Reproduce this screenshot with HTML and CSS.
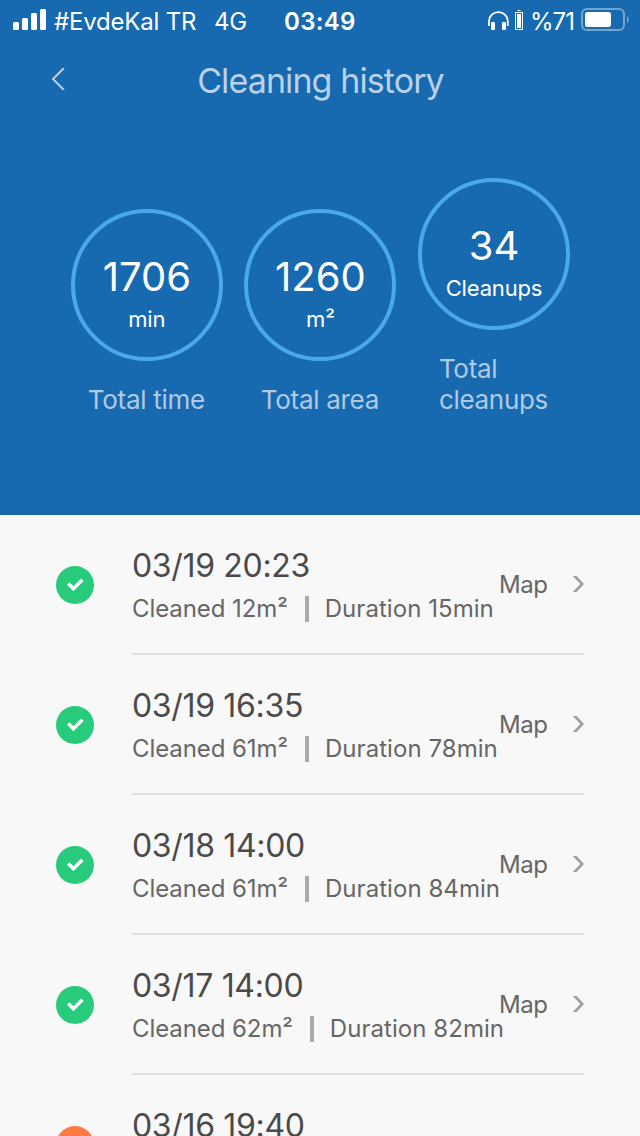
FILE: index.html
```html
<!DOCTYPE html>
<html lang="en">
<head>
<meta charset="utf-8">
<title>Cleaning history</title>
<link rel="stylesheet" href="styles.css">
</head>
<body>
<svg class="defs" width="0" height="0">
  <symbol id="check" viewBox="0 0 38 38"><circle cx="19" cy="19" r="19" fill="#28ca7b"/><path d="M12.2 17.6l5.2 5.2 9-9" fill="none" stroke="#fff" stroke-width="3.6"/></symbol>
  <symbol id="alert" viewBox="0 0 38 38"><circle cx="19" cy="19" r="19" fill="#ff7a45"/><path d="M19 11v10M19 25v4" fill="none" stroke="#fff" stroke-width="3.6"/></symbol>
  <symbol id="next" viewBox="0 0 12 18"><path d="M.8 1h3.8L12 9 4.6 17H.8L8.3 9z" fill="#a0a0a0"/></symbol>
</svg>
<div class="screen">
  <header class="header">
    <div class="status">
      <svg class="signal" width="34" height="22" viewBox="0 0 34 22" fill="#fff"><rect x="0" y="13" width="6" height="8" rx="1.5"/><rect x="9" y="9" width="6" height="12" rx="1.5"/><rect x="18" y="4" width="6" height="17" rx="1.5"/><rect x="27" y="0" width="6" height="21" rx="1.5"/></svg>
      <span class="carrier">#EvdeKal TR</span>
      <span class="network">4G</span>
      <span class="clock">03:49</span>
      <svg class="phones" width="21" height="20" viewBox="0 0 21 20"><path d="M1 15V10a9.4 8.8 0 0 1 18.8 0v5" fill="none" stroke="#fff" stroke-width="1.8"/><rect x="3" y="11" width="4" height="8" rx="1" fill="#fff"/><rect x="14" y="11" width="4" height="8" rx="1" fill="#fff"/></svg>
      <svg class="cell" width="8" height="20" viewBox="0 0 8 20"><path d="M2.5 .5h3" stroke="#fff"/><rect x=".5" y="2.5" width="7" height="17" fill="none" stroke="#fff"/><rect x="2" y="4" width="4" height="14" fill="#fff"/></svg>
      <span class="percent">%71</span>
      <svg class="battery" width="48" height="24" viewBox="0 0 48 24"><rect x="1" y="1" width="42" height="21" rx="5" fill="none" stroke="#75a5cf" stroke-width="2"/><rect x="4" y="4" width="26" height="15" rx="2.5" fill="#fff"/><path d="M46 8c2.2 1.2 2.2 6 0 7.2z" fill="#75a5cf"/></svg>
    </div>
    <nav class="nav">
      <svg class="back" width="14" height="24" viewBox="0 0 14 24"><path d="M12.7 1.3L2 12l10.7 10.7" fill="none" stroke="#b9d2e8" stroke-width="2"/></svg>
      <h1 class="title">Cleaning history</h1>
    </nav>
    <div class="stats">
      <div class="stat"><div class="ring"><span class="value">1706</span><span class="unit">min</span></div><div class="label">Total time</div></div>
      <div class="stat"><div class="ring"><span class="value">1260</span><span class="unit">m²</span></div><div class="label">Total area</div></div>
      <div class="stat"><div class="ring"><span class="value">34</span><span class="unit">Cleanups</span></div><div class="label">Total<br>cleanups</div></div>
    </div>
  </header>
  <main class="list">
    <article class="row"><svg class="state"><use href="#check"/></svg><div class="entry"><div class="info"><div class="date">03/19 20:23</div><div class="detail"><span>Cleaned 12m²</span><i class="bar"></i><span>Duration 15min</span></div></div><span class="map">Map</span><svg class="next"><use href="#next"/></svg></div></article>
    <article class="row"><svg class="state"><use href="#check"/></svg><div class="entry"><div class="info"><div class="date">03/19 16:35</div><div class="detail"><span>Cleaned 61m²</span><i class="bar"></i><span>Duration 78min</span></div></div><span class="map">Map</span><svg class="next"><use href="#next"/></svg></div></article>
    <article class="row"><svg class="state"><use href="#check"/></svg><div class="entry"><div class="info"><div class="date">03/18 14:00</div><div class="detail"><span>Cleaned 61m²</span><i class="bar"></i><span>Duration 84min</span></div></div><span class="map">Map</span><svg class="next"><use href="#next"/></svg></div></article>
    <article class="row"><svg class="state"><use href="#check"/></svg><div class="entry"><div class="info"><div class="date">03/17 14:00</div><div class="detail"><span>Cleaned 62m²</span><i class="bar"></i><span>Duration 82min</span></div></div><span class="map">Map</span><svg class="next"><use href="#next"/></svg></div></article>
    <article class="row"><svg class="state"><use href="#alert"/></svg><div class="entry"><div class="info"><div class="date">03/16 19:40</div></div></div></article>
  </main>
</div>
</body>
</html>
```
FILE: styles.css
```css
* { box-sizing: border-box; }
body { margin: 0; font-family: Inter, "Liberation Sans", sans-serif; }
svg { display: block; flex: none; }
.defs { position: absolute; }
.screen { width: 640px; height: 1136px; overflow: hidden; background: #f8f8f8; white-space: nowrap; }
.header { height: 515px; background: #1769b0; color: #fff; display: flex; flex-direction: column; }
.status { height: 41px; display: flex; align-items: center; padding-left: 13px; font-size: 24px; line-height: 41px; }
.status span { padding-top: 1px; }
.signal { margin-top: -1px; }
.carrier { width: 160px; padding-left: 7px; letter-spacing: -0.2px; }
.network { width: 77px; padding-left: 7px; letter-spacing: -0.3px; }
.clock { width: 204px; font-weight: 600; letter-spacing: 0.3px; }
.cell { margin: -2px 7px 0 6px; }
.percent { width: 51px; letter-spacing: -1px; }
.battery { margin-top: -1px; }
.nav { height: 80px; display: flex; align-items: center; padding-left: 51px; }
.back { margin-top: -4px; }
.title { margin: 0; width: 511px; text-align: center; font-size: 34px; font-weight: 400; line-height: 80px; letter-spacing: -0.9px; color: #b9d2e8; }
.stats { height: 294px; display: flex; align-items: flex-end; padding-left: 60px; }
.stat { width: 173.6px; display: flex; flex-direction: column; align-items: center; gap: 23px; }
.ring { width: 152px; height: 152px; border: 4px solid #4ba9e9; border-radius: 50%; padding-top: 43px; display: flex; flex-direction: column; align-items: center; }
.value { font-size: 40px; line-height: 42px; }
.unit { font-size: 22px; line-height: 42px; letter-spacing: -0.15px; }
.label { font-size: 26px; line-height: 31px; letter-spacing: -0.3px; padding-right: 1px; color: #b0cae4; }
.row { height: 140px; display: flex; align-items: center; padding-left: 56px; }
.state { width: 38px; height: 38px; margin-right: 38px; }
.entry { width: 452px; height: 140px; border-bottom: 2px solid #dedede; display: flex; padding-top: 28px; }
.info { width: 367px; height: 90px; }
.date { font-size: 32px; line-height: 45px; height: 44px; letter-spacing: -0.33px; color: #4a4a4a; }
.detail { display: flex; align-items: center; font-size: 24px; line-height: 44px; color: #666; }
.bar { width: 4px; height: 26px; background: #aaa; margin: 0 16px 0 17px; flex: none; }
.detail span { letter-spacing: 0.05px; }
.detail span:first-child { letter-spacing: -0.08px; }
.map { width: 73px; font-size: 24px; line-height: 84px; letter-spacing: -0.4px; color: #666; }
.next { width: 12px; height: 18px; margin-top: 32px; }
```
